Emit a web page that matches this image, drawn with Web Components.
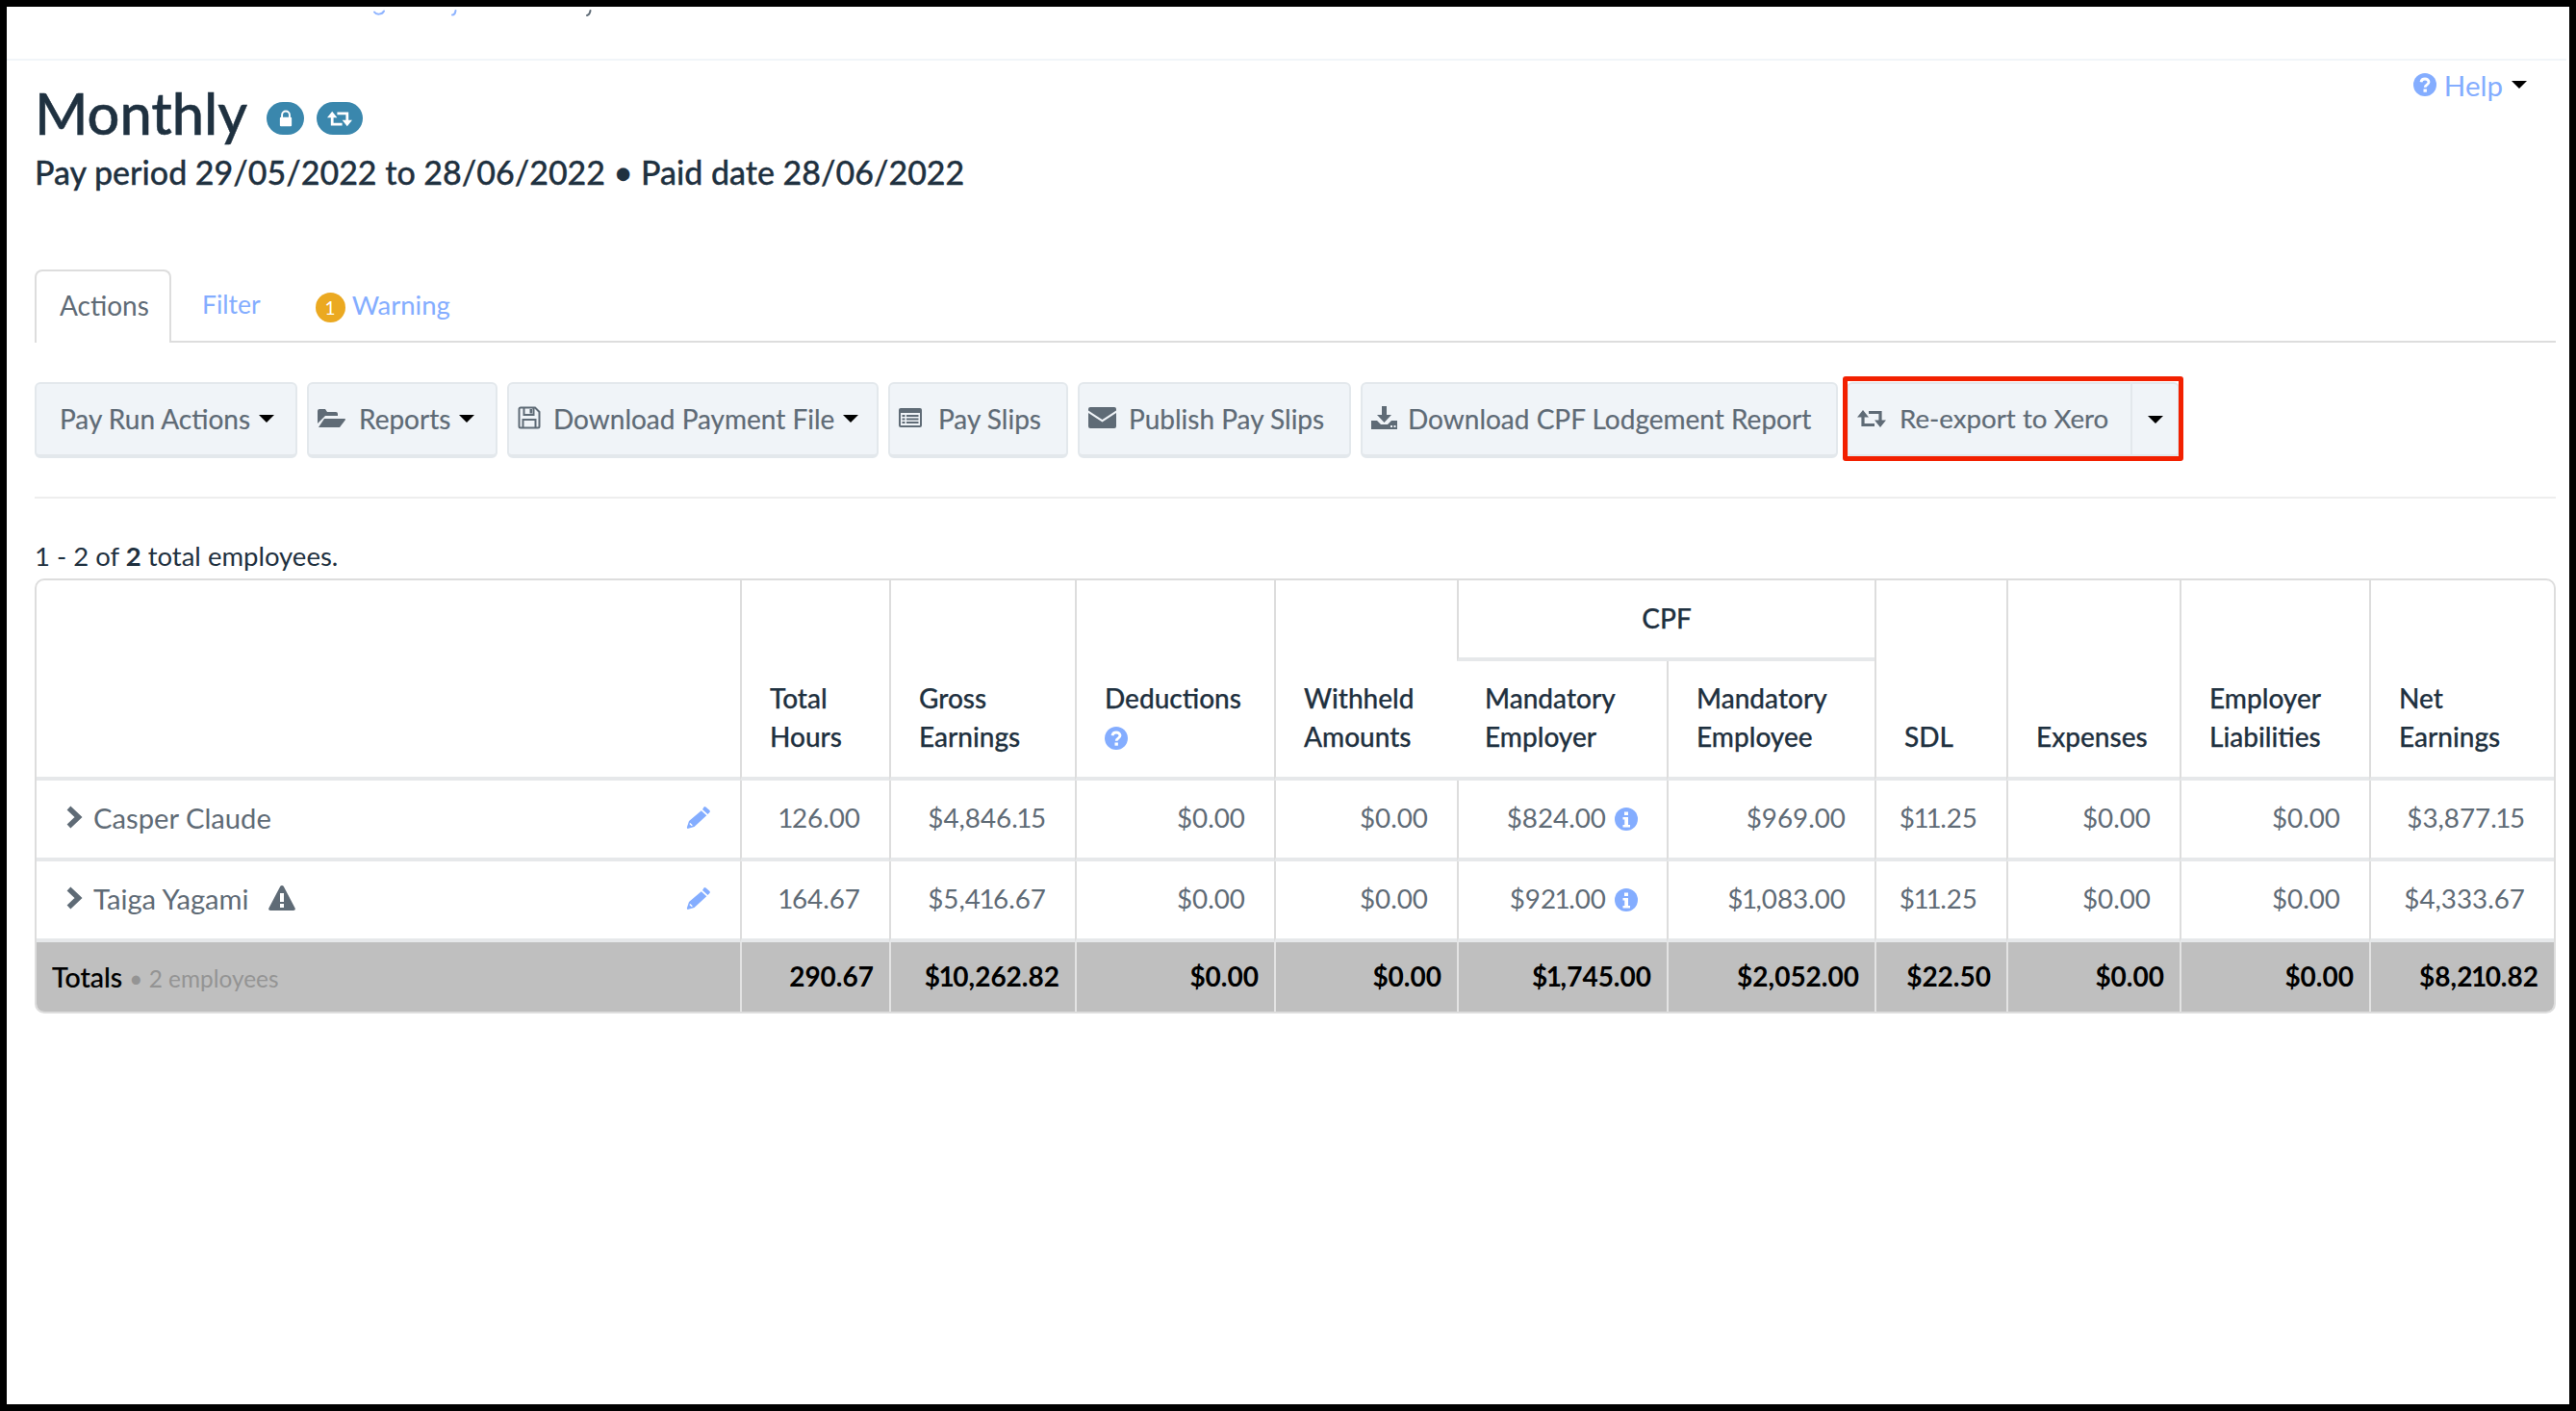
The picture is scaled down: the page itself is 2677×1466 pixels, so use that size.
<!DOCTYPE html>
<html lang="en"><head><meta charset="utf-8"><title>Monthly pay run</title>
<style>
html,body{margin:0;padding:0;background:#000;}
body{font-family:Lato,"Open Sans",sans-serif;color:#1f3140;}
</style></head>
<body>
<payrun-page>
  <page-title slot="title" name="Monthly" sub="Pay period 29/05/2022 to 28/06/2022 • Paid date 28/06/2022"></page-title>
  <tab-bar slot="tabs"></tab-bar>
  <action-bar slot="actions"></action-bar>
  <pay-table slot="table"></pay-table>
</payrun-page>
<script>
const I={
 lock:'<svg viewBox="0 0 16 20" width="14" height="18" style="display:block"><path d="M3.500 9V6a4.500 4.500 0 0 1 9 0v3" fill="none" stroke="currentColor" stroke-width="2.200"/><rect x="1" y="8.500" width="14" height="11" rx="1.200" fill="currentColor"/></svg>',
 retweet:'<svg viewBox="0 0 30 20" width="100%" height="100%" style="display:block"><path d="M6 7V16.500H18M24 13V3.500H12" fill="none" stroke="currentColor" stroke-width="3.200"/><path d="M0 8.500L6 1l6 7.500zM18 11.500l6 7.500 6-7.500z" fill="currentColor"/></svg>',
 folder:'<svg viewBox="0 0 29 20" width="29" height="20"><path d="M0 3a2 2 0 0 1 2-2h6l2 3h9a2 2 0 0 1 2 2v2H8L2 14 0 16z" fill="currentColor"/><path d="M7 10h21c1 0 1.300.7.700 1.500L23 19H1z" fill="currentColor" transform="translate(0 1)"/></svg>',
 floppy:'<svg viewBox="0 0 24 24" width="24" height="24"><path d="M3 1.500h15l4.500 4.500v15a1.500 1.500 0 0 1-1.500 1.500H3A1.500 1.500 0 0 1 1.500 21V3A1.500 1.500 0 0 1 3 1.500z" fill="none" stroke="currentColor" stroke-width="2"/><path d="M6.500 2v7h10V2M5.500 22v-8h13v8" fill="none" stroke="currentColor" stroke-width="2"/><rect x="12.500" y="3" width="2.500" height="4.500" fill="currentColor"/></svg>',
 list:'<svg viewBox="0 0 24 20" width="24" height="20"><rect x="0" y="0" width="24" height="20" rx="2" fill="currentColor"/><g fill="#f0f4f8"><rect x="2" y="5" width="20" height="13"/></g><g fill="currentColor"><rect x="3.500" y="7" width="3" height="2"/><rect x="8" y="7" width="12.500" height="2"/><rect x="3.500" y="10.500" width="3" height="2"/><rect x="8" y="10.500" width="12.500" height="2"/><rect x="3.500" y="14" width="3" height="2"/><rect x="8" y="14" width="12.500" height="2"/></g></svg>',
 mail:'<svg viewBox="0 0 29 22" width="29" height="22"><path d="M2 0h25a2 2 0 0 1 2 2v1.500L14.500 13 0 3.500V2a2 2 0 0 1 2-2z" fill="currentColor"/><path d="M0 6l14.500 9.500L29 6v14a2 2 0 0 1-2 2H2a2 2 0 0 1-2-2z" fill="currentColor"/></svg>',
 download:'<svg viewBox="0 0 27 24" width="27" height="24"><path d="M11 0h5v9h5l-7.500 8L6 9h5z" fill="currentColor"/><path d="M0 15h6l4 4h7l4-4h6v9H0z" fill="currentColor"/><rect x="20" y="20" width="2" height="2" fill="#f0f4f8"/><rect x="23.500" y="20" width="2" height="2" fill="#f0f4f8"/></svg>',
 pencil:'<svg viewBox="0 0 26 24" width="26" height="24"><path d="M18.500 1.500a1.500 1.500 0 0 1 2 0l4 3.500a1.500 1.500 0 0 1 0 2L22.500 9 17 4zM15.800 5.200l5.500 5L8.500 22 1.500 24 .8 22.800 3 16z" fill="currentColor"/><path d="M3.800 18.500l2.500 2.300" stroke="#fff" stroke-width="1.500"/></svg>',
 chevron:'<svg viewBox="0 0 17 24" width="17" height="24"><path d="M2.500 2.500l10 9.500-10 9.500" fill="none" stroke="currentColor" stroke-width="5.500"/></svg>',
 warn:'<svg viewBox="0 0 28 26" width="28" height="26"><path d="M14 0c.8 0 1.400.4 1.800 1.100l11.800 22.300c.7 1.300-.2 2.600-1.600 2.600H2c-1.400 0-2.300-1.300-1.600-2.600L12.200 1.100C12.600.4 13.200 0 14 0z" fill="currentColor"/><rect x="12" y="8" width="4" height="9" fill="#fff"/><rect x="12" y="19" width="4" height="4" fill="#fff"/></svg>',
 q:'<svg viewBox="0 0 24 24" width="24" height="24" style="display:block"><circle cx="12" cy="12" r="12" fill="currentColor"/><path d="M8 9.200c.3-2 2-3.200 4-3.200 2.300 0 4 1.400 4 3.300 0 2.900-3.800 2.900-3.800 5.500" fill="none" stroke="#fff" stroke-width="2.800"/><rect x="10.500" y="16.500" width="3.400" height="3.200" fill="#fff"/></svg>',
 info:'<svg viewBox="0 0 24 24" width="24" height="24"><circle cx="12" cy="12" r="12" fill="currentColor"/><rect x="10" y="4.500" width="4" height="3.500" fill="#fff"/><path d="M8.500 10h5.500v8h2v2.500H8.500V18h1.800v-5.500H8.500z" fill="#fff"/></svg>'
};
function reg(name,css,html){
  customElements.define(name,class extends HTMLElement{
    connectedCallback(){
      if(this.shadowRoot)return;
      const s=this.attachShadow({mode:'open'});
      s.innerHTML='<style>'+css+'</style>'+(typeof html==='function'?html(this):html);
    }
  });
}
reg('payrun-page',`
 :host{display:block;margin:7px;height:1452px;background:#fff;box-sizing:border-box;overflow:hidden;}
 .crumb{height:54px;display:block;}
 .crumb svg{display:block}
 .rule{height:2px;background:#f1f5f9;margin-right:3px;}
 .body{padding:0 14px 0 29px;}
`,`
 <div class="crumb"><svg width="640" height="12" viewBox="0 0 640 12" fill="none" stroke-linecap="round"><path d="M382 5.500c2 3 8 3 10-1" stroke="#8fb4ff" stroke-width="2"/><path d="M463 8.500c2 0 3-1 3.500-4.500" stroke="#8fb4ff" stroke-width="2"/><path d="M603 9c2-.5 3-2 3.500-5" stroke="#5f6b76" stroke-width="2"/></svg></div>
 <div class="rule"></div>
 <div class="body"><slot name="title"></slot><slot name="tabs"></slot><slot name="actions"></slot><slot name="table"></slot></div>
`);
reg('page-title',`
 :host{display:flex;justify-content:space-between;height:217px;color:#1f3140;}
 h1{margin:19px 0 0;font-size:59.500px;font-weight:500;line-height:70px;display:flex;align-items:center;-webkit-text-stroke:.5px #1f3140}
 .b{display:inline-flex;align-items:center;justify-content:center;height:34px;background:#3a87ad;color:#fff;border-radius:17px;margin-left:13px;margin-top:12px;box-sizing:border-box}
 .b1{width:39px;margin-left:20px}.b2{width:48px}
 .b2 span{width:26px;height:19px;display:block}
 p{margin:5px 0 0;font-size:34px;line-height:44px;font-weight:500;white-space:nowrap;-webkit-text-stroke:.3px #1f3140}
 .help{display:flex;align-items:center;height:24px;margin:13px 30px 0 0;color:#84adff;font-size:29.500px;gap:9px}
 .help .q{width:24px;height:24px;display:block;margin-right:-1px}
 .caret{width:0;height:0;border:8px solid transparent;border-top-color:#000;border-bottom:0;margin-left:0}
`,h=>`
 <div><h1>${h.getAttribute('name')}<span class="b b1">${I.lock}</span><span class="b b2"><span>${I.retweet}</span></span></h1>
 <p>${h.getAttribute('sub')}</p></div>
 <div class="help"><span class="q">${I.q}</span><span>Help</span><span class="caret"></span></div>
`);
reg('tab-bar',`
 :host{display:flex;height:76px;box-sizing:border-box;border-bottom:2px solid #dddddd;font-size:26.500px;}
 .t{height:76px;padding-bottom:4px;box-sizing:border-box;display:flex;align-items:center;color:#84adff;}
 .a{width:142px;border:2px solid #dddddd;border-bottom:0;border-radius:8px 8px 0 0;background:#fff;color:#5f6b76;padding-left:24px;font-size:28px}
 .f{margin-left:32px;}
 .w{margin-left:57px;gap:7px;font-size:27.500px}
 .n{width:31px;height:31px;border-radius:50%;background:#eba921;color:#fff;font-size:19px;display:flex;align-items:center;justify-content:center;margin-top:7px}
`,`<div class="t a">Actions</div><div class="t f">Filter</div><div class="t w"><span class="n">1</span><span>Warning</span></div>`);
reg('tool-button',`
 :host{display:flex;align-items:center;box-sizing:border-box;height:79px;padding-bottom:2px;background:#f0f4f8;border:2px solid #e3e8ec;border-bottom-width:4px;border-radius:6px;padding-left:24px;color:#5f6b76;font-size:28px;white-space:nowrap;-webkit-text-stroke:.2px #5f6b76}
 ::slotted(svg){display:block;margin:-2px var(--gap,13px) 0 -15px;flex:none}
 .c{width:0;height:0;border:8px solid transparent;border-top-color:#000;border-bottom:0;margin-left:9px;display:none}
 :host([caret]) .c{display:block}
`,`<slot></slot><span class="c"></span>`);
reg('split-button',`
 :host{display:flex;position:relative;box-sizing:border-box;width:346px;height:79px;background:#f0f4f8;border:2px solid #e3e8ec;border-bottom-width:4px;border-radius:6px;color:#5f6b76;font-size:27.700px;white-space:nowrap;margin-left:-1px;-webkit-text-stroke:.2px #5f6b76}
 .m{width:295px;flex:none;display:flex;align-items:center;padding:0 0 2px 9px;box-sizing:border-box;border-right:2px solid #e3e8ec;gap:14px}
 .i{width:30px;height:20px;display:block;flex:none}
 .d{flex:1;display:flex;align-items:center;justify-content:center}
 .c{width:0;height:0;border:8px solid transparent;border-top-color:#000;border-bottom:0;}
 .red{position:absolute;top:-8px;left:-6px;right:-6px;bottom:-7px;border:5px solid #f22000;border-radius:3px;pointer-events:none}
`,`<div class="m"><span class="i">${I.retweet}</span><span>Re-export to Xero</span></div><div class="d"><span class="c"></span></div><span class="red"></span>`);
reg('action-bar',`
 :host{display:block;padding-top:41px;}
 .row{display:flex;gap:10px;}
 hr{border:0;height:2px;background:#eeeeee;margin:40px 0 0;}
 .s{font-size:27.500px;line-height:32px;margin:44px 0 0;height:39px;color:#1f3140}
 b{font-weight:700}
`,`<div class="row">
 <tool-button caret style="width:273px">Pay Run Actions</tool-button>
 <tool-button caret style="width:198px;--gap:14px">${I.folder}Reports</tool-button>
 <tool-button caret style="width:386px;--gap:13px">${I.floppy}Download Payment File</tool-button>
 <tool-button style="width:187px;--gap:17px">${I.list}Pay Slips</tool-button>
 <tool-button style="width:284px;--gap:13px">${I.mail}Publish Pay Slips</tool-button>
 <tool-button style="width:496px;--gap:11px">${I.download}Download CPF Lodgement Report</tool-button>
 <split-button></split-button>
 </div><hr><div class="s">1 - 2 of <b>2</b> total employees.</div>`);
const W=[731,155,193,207,190,218,216,137,180,197,192];
const one=s=>s.replace(/1/g,'<i>1</i>');
const name=(n,w)=>`<div class="nm"><span class="ch">${I.chevron}</span><span>${n}</span>${w?`<span class="wn">${I.warn}</span>`:''}<span class="pn">${I.pencil}</span></div>`;
const inf=`<span class="inf">${I.info}</span>`;
const row=(n,w,v)=>`<tr class="r"><td class="n">${name(n,w)}</td>${v.map(x=>`<td>${x.replace(/^[^<]+/,one)}</td>`).join('')}</tr>`;
const tot=['290.67','$10,262.82','$0.00','$0.00','$1,745.00','$2,052.00','$22.50','$0.00','$0.00','$8,210.82'];
reg('pay-table',`
 :host{display:block;width:2620px;box-sizing:border-box;border:2px solid #dddddd;border-radius:10px;overflow:hidden;background:#fff;}
 table{border-collapse:separate;border-spacing:0;table-layout:fixed;width:2616px;font-size:27.800px;color:#5f6b76}
 th{font-weight:500;font-size:28px;color:#1f3140;text-align:left;vertical-align:bottom;line-height:40px;padding:0 0 22px 29px;border-left:2px solid #dddddd;border-bottom:4px solid #e6e8ea;box-sizing:border-box;-webkit-text-stroke:.25px #1f3140}
 th:first-child{border-left:0}
 th.cpf{text-align:center;vertical-align:middle;padding:0 0 3px;height:84px}
 th.sub{height:124px}
 td{border-left:2px solid #dddddd;border-bottom:4px solid #e6e8ea;text-align:right;padding:0 30px 3px 0;box-sizing:border-box;}
 td.n{border-left:0;padding:0 30px 0 31px;text-align:left;font-size:29.200px}
 tr.r{height:84px}
 i{font-style:normal;margin:0 -1.500px}
 .nm{display:flex;align-items:center;padding-bottom:3px}
 .ch{width:17px;height:24px;margin-right:11px;display:block;margin-top:-1px}
 .wn{margin-left:20px;display:block;height:26px;margin-top:-2px;color:#5f6b76}
 .pn{margin-left:auto;color:#84adff;height:24px;display:block;margin-top:-1px}
 svg{display:block}
 .q{display:inline-block;width:24px;height:24px;color:#84adff;vertical-align:-3px}
 .inf{display:inline-block;vertical-align:-3px;color:#84adff;margin-left:9px;height:24px}
 tfoot td{background:#bfbfbf;border-bottom:0;border-left-color:#e3e3e3;color:#000;font-weight:700;padding:0 16px 2px 0;height:72px;font-size:28px}
 tfoot td.n{padding-left:16px;font-weight:500;font-size:28.500px;-webkit-text-stroke:.2px #000}
 small{font-size:24.400px;color:#949494;font-weight:400;-webkit-text-stroke:0}
`,`<table><colgroup>${W.map(w=>`<col style="width:${w}px">`).join('')}</colgroup>
<thead><tr>
 <th rowspan="2"></th><th rowspan="2">Total<br>Hours</th><th rowspan="2">Gross<br>Earnings</th><th rowspan="2">Deductions<br><span class="q">${I.q}</span></th><th rowspan="2">Withheld<br>Amounts</th>
 <th colspan="2" class="cpf">CPF</th>
 <th rowspan="2">SDL</th><th rowspan="2">Expenses</th><th rowspan="2">Employer<br>Liabilities</th><th rowspan="2">Net<br>Earnings</th>
</tr><tr><th class="sub">Mandatory<br>Employer</th><th class="sub">Mandatory<br>Employee</th></tr></thead>
<tbody>
${row('Casper Claude',0,['126.00','$4,846.15','$0.00','$0.00','$824.00'+inf,'$969.00','$11.25','$0.00','$0.00','$3,877.15'])}
${row('Taiga Yagami',1,['164.67','$5,416.67','$0.00','$0.00','$921.00'+inf,'$1,083.00','$11.25','$0.00','$0.00','$4,333.67'])}
</tbody>
<tfoot><tr><td class="n">Totals <small>• 2 employees</small></td>${tot.map(t=>`<td>${one(t)}</td>`).join('')}</tr></tfoot>
</table>`);
</script>
</body></html>
